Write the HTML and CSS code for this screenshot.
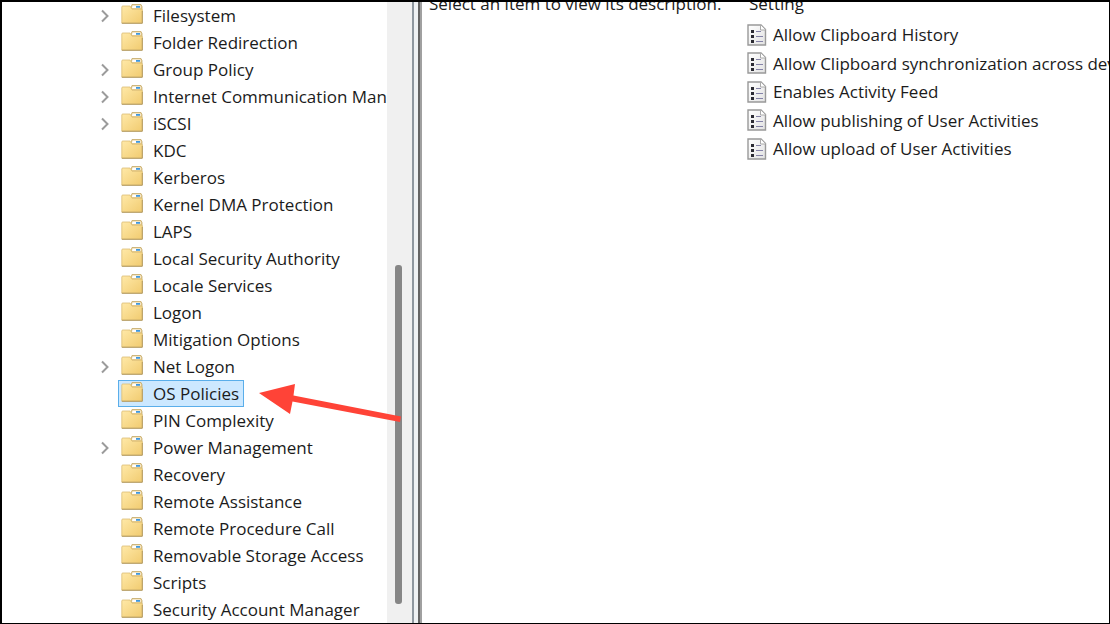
FILE: index.html
```
<!DOCTYPE html>
<html lang="en">
<head>
  <meta charset="UTF-8" />
  <meta name="viewport" content="width=device-width, initial-scale=1.0" />
  <title>Local Group Policy Editor</title>
  <link rel="stylesheet" href="styles.css">
</head>
<body>
  <svg class="symbols" aria-hidden="true">
    <defs>
      <linearGradient id="folder-fill" x1="0" y1="0" x2="1" y2="1">
        <stop offset="0" stop-color="#ffe9a8" />
        <stop offset="1" stop-color="#f1cb70" />
      </linearGradient>
      <linearGradient id="page-fill" x1="0" y1="0" x2="1" y2="1">
        <stop offset="0" stop-color="#ffffff" />
        <stop offset="1" stop-color="#e2e2e2" />
      </linearGradient>
    </defs>
    <symbol id="folder" viewBox="0 0 22 20">
      <path d="M9.5 5 L11 .5 H20 L21 2.5 V8 H9.5z" fill="#e6cd90" stroke="#c4a968" stroke-width=".8" />
      <path d="M11.5 1.5 H19.5 V4 H11z" fill="#fff" />
      <path d="M15 2 H19 V3.8 H15z" fill="#3f97dc" />
      <path d="M.8 3 Q.8 2 1.8 2 H9 L11 5.2 H20.5 Q21.3 5.2 21.3 6 V19 H.8z" fill="url(#folder-fill)" stroke="#dcbc74" stroke-width=".8" />
      <path d="M.8 19.3 H21.3 V7" fill="none" stroke="#b39a62" stroke-width="1" />
    </symbol>
    <symbol id="policy" viewBox="0 0 20 22">
      <path d="M1 1 H14 L18.5 5.5 V21 H1z" fill="url(#page-fill)" stroke="#999" stroke-width="1.4" />
      <path d="M13.5 1 V6 H18.5" fill="#fff" stroke="#aaa" />
      <path d="M4 6h3v3h-3z M4 11h3v3h-3z M4 16h3v3h-3z" fill="#2b2b33" />
      <path d="M9 7.5h5 M9 12.5h7 M9 17.5h7" stroke="#8583a8" stroke-width="1.2" />
    </symbol>
    <symbol id="chevron" viewBox="0 0 10 14">
      <path d="M2 1.5 L7.5 7 L2 12.5" fill="none" stroke="#9b9b9b" stroke-width="2" />
    </symbol>
  </svg>

  <main class="window">
    <nav class="tree-pane" aria-label="Policy tree">
      <ul class="tree">
        <li class="row"><button class="toggle" aria-label="Expand Filesystem"><svg><use href="#chevron" /></svg></button><button class="item"><svg><use href="#folder" /></svg>Filesystem</button></li>
        <li class="row"><button class="item"><svg><use href="#folder" /></svg>Folder Redirection</button></li>
        <li class="row"><button class="toggle" aria-label="Expand Group Policy"><svg><use href="#chevron" /></svg></button><button class="item"><svg><use href="#folder" /></svg>Group Policy</button></li>
        <li class="row"><button class="toggle" aria-label="Expand Internet Communication Management"><svg><use href="#chevron" /></svg></button><button class="item"><svg><use href="#folder" /></svg>Internet Communication Management</button></li>
        <li class="row"><button class="toggle" aria-label="Expand iSCSI"><svg><use href="#chevron" /></svg></button><button class="item"><svg><use href="#folder" /></svg>iSCSI</button></li>
        <li class="row"><button class="item"><svg><use href="#folder" /></svg>KDC</button></li>
        <li class="row"><button class="item"><svg><use href="#folder" /></svg>Kerberos</button></li>
        <li class="row"><button class="item"><svg><use href="#folder" /></svg>Kernel DMA Protection</button></li>
        <li class="row"><button class="item"><svg><use href="#folder" /></svg>LAPS</button></li>
        <li class="row"><button class="item"><svg><use href="#folder" /></svg>Local Security Authority</button></li>
        <li class="row"><button class="item"><svg><use href="#folder" /></svg>Locale Services</button></li>
        <li class="row"><button class="item"><svg><use href="#folder" /></svg>Logon</button></li>
        <li class="row"><button class="item"><svg><use href="#folder" /></svg>Mitigation Options</button></li>
        <li class="row"><button class="toggle" aria-label="Expand Net Logon"><svg><use href="#chevron" /></svg></button><button class="item"><svg><use href="#folder" /></svg>Net Logon</button></li>
        <li class="row"><button class="item selected" aria-current="true"><svg><use href="#folder" /></svg>OS Policies</button></li>
        <li class="row"><button class="item"><svg><use href="#folder" /></svg>PIN Complexity</button></li>
        <li class="row"><button class="toggle" aria-label="Expand Power Management"><svg><use href="#chevron" /></svg></button><button class="item"><svg><use href="#folder" /></svg>Power Management</button></li>
        <li class="row"><button class="item"><svg><use href="#folder" /></svg>Recovery</button></li>
        <li class="row"><button class="item"><svg><use href="#folder" /></svg>Remote Assistance</button></li>
        <li class="row"><button class="item"><svg><use href="#folder" /></svg>Remote Procedure Call</button></li>
        <li class="row"><button class="item"><svg><use href="#folder" /></svg>Removable Storage Access</button></li>
        <li class="row"><button class="item"><svg><use href="#folder" /></svg>Scripts</button></li>
        <li class="row"><button class="item"><svg><use href="#folder" /></svg>Security Account Manager</button></li>
      </ul>
    </nav>
    <div class="scrollbar"><div class="thumb"></div></div>
    <div class="splitter"></div>
    <section class="description">
      <p class="heading">Select an item to view its description.</p>
    </section>
    <section class="settings">
      <h2 class="heading">Setting</h2>
      <ul class="policies">
        <li><a class="policy" href="#"><svg><use href="#policy" /></svg>Allow Clipboard History</a></li>
        <li><a class="policy" href="#"><svg><use href="#policy" /></svg>Allow Clipboard synchronization across devices</a></li>
        <li><a class="policy" href="#"><svg><use href="#policy" /></svg>Enables Activity Feed</a></li>
        <li><a class="policy" href="#"><svg><use href="#policy" /></svg>Allow publishing of User Activities</a></li>
        <li><a class="policy" href="#"><svg><use href="#policy" /></svg>Allow upload of User Activities</a></li>
      </ul>
    </section>
    <svg class="arrow" viewBox="0 0 142 32" aria-hidden="true">
      <path d="M0 9 L36 0 L34.5 11.5 L142 32.5 L141 38 L33.5 17.5 L31 30z" fill="#ff4337" />
    </svg>
  </main>
</body>
</html>
```
FILE: styles.css
```
* {
  box-sizing: border-box;
}
body {
  margin: 0;
  font-family: "Open Sans", "Noto Sans", sans-serif;
  font-size: 17px;
  line-height: 27px;
  color: #1b1b1b;
  background: #fff;
}
button {
  font: inherit;
  color: inherit;
  background: none;
  border: 0;
  padding: 0;
}
ul {
  list-style: none;
  margin: 0;
  padding: 0;
}
.symbols {
  position: absolute;
  width: 0;
  height: 0;
}
.window {
  position: relative;
  display: flex;
  height: 100vh;
  overflow: hidden;
  border: 1px solid #000;
  border-width: 2px 1px 1px 2px;
}

/* tree */
.tree-pane {
  flex: 0 0 385px;
  overflow: hidden;
}
.row {
  display: flex;
  justify-content: flex-start;
  height: 27px;
  padding-left: 116px;
}
.toggle {
  flex: none;
  width: 18px;
  margin-left: -18px;
  display: flex;
  align-items: center;
}
.toggle svg {
  width: 10px;
  height: 14px;
}
.item {
  flex: none;
  display: flex;
  align-items: center;
  gap: 10px;
  border: 1px solid transparent;
  padding: 0 4px 0 2px;
  line-height: 25px;
  white-space: nowrap;
}
.item svg {
  width: 22px;
  height: 20px;
  margin-bottom: 3px;
  flex: none;
}
.selected {
  background: #cce8ff;
  border-color: #5aaeea;
}

/* scrollbar and splitter */
.scrollbar {
  flex: 0 0 25px;
  display: flex;
  flex-direction: column;
  align-items: center;
  justify-content: flex-end;
  padding: 0 2px 19px 0;
  background: #f0f0f0;
}
.thumb {
  width: 7px;
  height: 339px;
  border-radius: 3px;
  background: #868686;
}
.splitter {
  flex: 0 0 10px;
  background: #eef1f3;
  border-left: 2px solid #8e979f;
  border-right: 2px solid #a0a0a0;
  box-shadow: inset -2px 0 #646464;
}

/* details */
.heading {
  display: flex;
  align-items: flex-end;
  height: 15px;
  margin: 0;
  font-size: inherit;
  font-weight: normal;
  white-space: nowrap;
  overflow: hidden;
}
.description {
  flex: 0 0 318px;
  padding-left: 7px;
}
.settings {
  flex: 1;
  min-width: 0;
  padding-left: 7px;
  overflow: hidden;
}
.settings .heading {
  padding-left: 2px;
}
.policies {
  display: grid;
  grid-auto-rows: 1fr;
  height: 143px;
  margin-top: 4px;
}
.policy {
  display: flex;
  align-items: center;
  gap: 6px;
  color: inherit;
  text-decoration: none;
  white-space: nowrap;
}
.policy svg {
  width: 20px;
  height: 22px;
  flex: none;
}

/* pointer drawn over the tree */
.arrow {
  position: absolute;
  left: 257px;
  top: 382px;
  width: 142px;
  height: 32px;
  overflow: visible;
}
```
